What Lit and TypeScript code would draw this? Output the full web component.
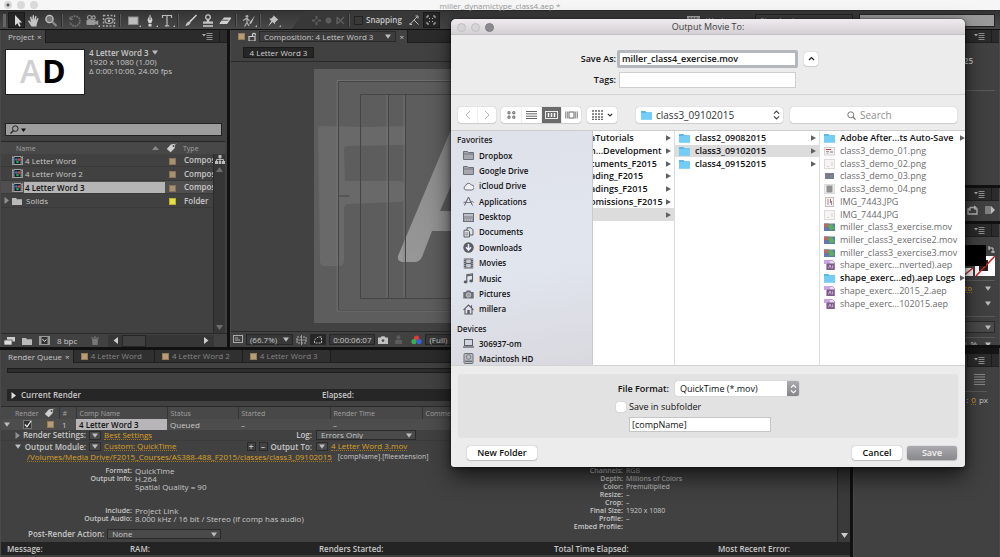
import { LitElement, html, css, svg, nothing } from "lit";
import { customElement, state } from "lit/decorators.js";

const base = css`
  * { box-sizing: border-box; margin: 0; padding: 0; }
  button, input, select { font: inherit; color: inherit; border: 0; background: none; outline: none; appearance: none; border-radius: 0; min-width: 0; }
  svg { display: block; flex: none; }
  ul { list-style: none; }
  a { color: inherit; text-decoration: none; }
`;

const glyph = (w: number, h: number, body: unknown) =>
  html`<svg width=${w} height=${h} viewBox="0 0 ${w} ${h}" fill="none" aria-hidden="true">${body}</svg>`;

const L = "#c4c4c4";
const D = "#737373";

const tools = {
  select: svg`<path d="M5 1v10.500l2.500-2.300 1.600 3.600 1.600-.7-1.600-3.600h3z" fill="#d8d8d8"/>`,
  hand: svg`<path d="M4.500 12.500 1.200 7.600c-.5-1 .7-1.600 1.400-.8l1.300 1.400L3 3.300c-.1-1 1.100-1.200 1.400-.2l.9 3L5.600 1.700c.1-1 1.300-1 1.400 0l.3 4 .9-3.400c.3-.9 1.400-.7 1.300.3L9 6.500l1.200-2c.5-.8 1.500-.3 1.200.6L9.800 10l-.4 2.500z" fill="${L}"/>`,
  zoom: svg`<circle cx="5.500" cy="5" r="3.600" fill="#777" stroke="${L}" stroke-width="1.300"/><path d="M8.200 7.700 12.500 12" stroke="#8c8c8c" stroke-width="2.200"/>`,
  rotate: svg`<path d="M3.500 3.400A5 5 0 1 1 2 8" stroke="${D}" stroke-width="1.800" stroke-dasharray="1.600 .9"/><path d="M1.500 2v4h4z" fill="${D}"/>`,
  camera: svg`<circle cx="4.500" cy="3.500" r="2" stroke="#999" stroke-width="1.200"/><circle cx="8.500" cy="3.500" r="1.700" stroke="#999" stroke-width="1.200"/><rect x="1.500" y="5.800" width="9" height="5.200" rx="1" fill="#999"/><path d="m10 8 3.200-1.800v5L10 9.500z" fill="#999"/>`,
  pan: svg`<rect x="1.500" y="1.500" width="11" height="10.500" stroke="#a6a6a6" stroke-width="1.400" stroke-dasharray="2 1.500"/><ellipse cx="7" cy="6.800" rx="4" ry="2.600" stroke="#a6a6a6" stroke-width="1.200"/><circle cx="7" cy="6.800" r="1.200" fill="#c4c4c4"/>`,
  rect: svg`<rect x="2.500" y="3" width="9.500" height="7.500" fill="#bdbdbd" stroke="#8d8d8d"/>`,
  pen: svg`<path d="M7 .5 4.600 5.500c0 1.800.9 2.800 1.200 3.700h2.400c.3-.9 1.200-1.900 1.200-3.700z" fill="#d2d2d2"/><path d="M7 2v4" stroke="#444" stroke-width=".8"/><rect x="5.500" y="10" width="3" height="2.500" fill="#d2d2d2"/>`,
  type: svg`<path d="M2.500 4V1.500h9V4M7 1.500v10.300M4.800 11.900h4.400" stroke="#bdbdbd" stroke-width="1.200"/>`,
  brush: svg`<path d="M12.500 1 6.500 8 5.300 7z" fill="#ddd"/><path d="M12.500 1 6.200 7.500" stroke="#ccc" stroke-width="1.400"/><path d="M5.800 7.300c1 .4 1 1.400.4 2.200C5.200 11 3.500 11.700 1.500 12c.6-1.600 1.500-4.500 4.300-4.700z" fill="${L}"/>`,
  stamp: svg`<circle cx="7" cy="3.200" r="2.300" stroke="${L}" stroke-width="1.300"/><path d="M6 5.500h2l.5 2H12v2.300H2V7.500h3.500z" fill="${L}"/><path d="M2 12h10" stroke="${L}" stroke-width="1.600"/>`,
  eraser: svg`<path d="M6 3.500h6.500c.6 0 .8.600.5 1L9.500 9.500c-.3.400-.6.600-1 .600H2.300c-.7 0-.9-.6-.6-1z" fill="#d0d0d0"/><path d="M4 6.200h6.300" stroke="#555"/>`,
  roto: svg`<circle cx="5" cy="2.300" r="1.400" fill="#aaa"/><path d="M1 6.500 5 4.200l2.500 3M5 5v3.500L2.500 12.500M5 8.500 7 12" stroke="#aaa" stroke-width="1.300"/><path d="M13 1.500 8 8l-.6 2.500L9.500 9z" fill="#ccc"/>`,
  pin: svg`<path d="m7.500 1.200 4.800 4.600-1.300.6L9 8.500l.1 2L6.700 8 2 12.500 5.300 7 3 4.600l2.300 0 2-2z" fill="#c0c0c0"/>`,
};

const tag = glyph(11, 10, svg`<path d="m.8 6 4-4.500 3.400-.8 1 1-.6 3.600-4 4z" fill="#cfcfcf"/><circle cx="7.500" cy="3" r=".9" fill="#444"/><path d="M8 2.500 10.500.5" stroke="#999" stroke-width=".8"/>`);
const menuIcon = glyph(11, 8, svg`<path d="M0 2h4L2 4.500z" fill="#aaa"/><path d="M4.500 1.500h6M4.500 3.500h6M4.500 5.500h6M4.500 7.500h6" stroke="#8d8d8d"/>`);
const down = glyph(6, 5, svg`<path d="M0 .5h6L3 4.700z" fill="#bdbdbd"/>`);
const right = glyph(5, 7, svg`<path d="M.5 0v7L5 3.500z" fill="#8f8f8f"/>`);
const compIcon = glyph(11, 9, svg`<rect width="11" height="9" fill="#a5a5a5"/><path d="M1.200 0v9M9.800 0v9" stroke="#444" stroke-width="1" stroke-dasharray="1.200 1"/><rect x="2.400" y="1" width="6.200" height="7" fill="#14202c"/><circle cx="4.400" cy="3.500" r="1.300" fill="#2c7fd6"/><circle cx="7" cy="3.600" r="1.300" fill="#e0402e"/><circle cx="5.500" cy="6" r="1.300" fill="#2aa65a"/>`);
const folderDark = glyph(10, 8, svg`<path d="M0 1h4l1 1.200h5V8H0z" fill="#b9b9b9"/>`);
const swatch = (c: string) => html`<i class="sw" style="background:${c}"></i>`;
const cam = glyph(10, 8, svg`<path d="M0 1.500h2.500L3.500.2h3l1 1.300H10V8H0z" fill="#c0c0c0"/><circle cx="5" cy="4.600" r="1.900" fill="#555" stroke="#eee" stroke-width=".6"/>`);

@customElement("save-dialog")
export class SaveDialog extends LitElement {
  @state() private sub = false;

  static styles = [base, css`
    :host { display: block; color: #111; font: 9px/12px "Open Sans", "Noto Sans", sans-serif; border-radius: 5px 5px 3px 3px; background: #ececec; box-shadow: 0 0 1px #000, 0 10px 22px rgba(0,0,0,.62), 0 1px 5px rgba(0,0,0,.5); overflow: hidden; }
    header { height: 16px; background: linear-gradient(#efebee, #d3d0d3); border-bottom: 1px solid #c2c0c2; display: flex; align-items: center; justify-content: center; position: relative; color: #404040; }
    h2 { font: inherit; }
    .lights { position: absolute; left: 6px; top: 4px; display: flex; gap: 5px; }
    .lights i { width: 9px; height: 9px; border-radius: 50%; background: #d6d4d6; border: 1px solid #c1bfc1; }
    .lights i:last-child { background: #8c8a91; border-color: #7e7c83; }
    .names { height: 60px; border-bottom: 1px solid #d2d2d2; padding: 14px 0 0; display: grid; grid-template-columns: 165px 181px 19px; grid-template-rows: 19px 16px; row-gap: 4px; column-gap: 1px; font-weight: 600; align-items: center; }
    .names label { text-align: right; }
    .names .one { border: 3px solid #b4b7bb; border-radius: 2px; background: #fff; height: 18px; padding: 0 2px; font-weight: 600; }
    .names .two { border: 1px solid #cfcfcf; background: #fff; height: 16px; margin: 0 2px; }
    .up { width: 14px; height: 14px; margin-left: 5px; justify-content: center; }
    .white { background: #fff; border-radius: 3px; box-shadow: 0 0 1px rgba(0,0,0,.35), 0 1px 1px rgba(0,0,0,.1); display: flex; align-items: center; }
    .bar { display: flex; height: 36px; padding: 5px 8px 0 7px; align-items: center; border-bottom: 1px solid #cdcdcd; color: #3c3c3c; }
    .bar .white { height: 16px; }
    .bar button { height: 16px; width: 19px; display: flex; align-items: center; justify-content: center; }
    .bar button + button { border-left: 1px solid #eee; }
    .bar .views button { width: 20px; }
    .bar .on { background: #6b6b6b; }
    .views { margin: 0 6px 0 5px; }
    .bar .act { width: 30px; gap: 4px; }
    .path { position: relative; width: 147px; margin: 0 7px 0 19px; padding-left: 5px; }
    .path select { flex: 1; padding: 0 4px; font-size: 10px; height: 16px; color: #333; }
    .path svg:last-child { margin-right: 3px; }
    .search { flex: 1; justify-content: center; gap: 4px; }
    .search input { width: 40px; font-size: 10px; }
    .search input::placeholder { color: #8f8f8f; opacity: 1; }
    .cols { display: grid; grid-template-columns: 142px 82px 145px 1fr; height: 235px; background: #fff; border-bottom: 1px solid #d2d2d2; }
    nav { background: linear-gradient(170deg, #dfe1e9 0%, #e1e6ee 55%, #d9d8df 100%); border-right: 1px solid #c9cad0; padding-top: 4px; overflow: hidden; font-size: 8px; line-height: 10px; font-weight: 600; }
    nav h3 { font-size: 8px; font-weight: 600; padding-left: 6px; height: 11px; color: #222; }
    nav ul { display: flex; flex-direction: column; justify-content: space-between; height: 165px; margin: 4px 0 9px; }
    nav .dev { height: 26px; margin: 3px 0 0; }
    nav a { display: flex; align-items: center; gap: 5px; padding-left: 12px; }
    .list { display: grid; grid-template-rows: repeat(14, 1fr); height: 179px; padding-top: 1px; overflow: hidden; min-width: 0; }
    .col { border-right: 1px solid #dcdcdc; overflow: hidden; }
    .col:last-child { border-right: 0; }
    .list a { display: flex; align-items: center; gap: 5px; padding: 0 3px 0 4px; white-space: nowrap; font-weight: 600; line-height: 12px; }
    .list a span { flex: 1; }
    .list .sel { background: #dcdcdc; }
    .list .dim { font-weight: 400; color: #6c6c6c; }
    .first a { padding-left: 0; gap: 0; }
    .first span { margin-left: -3px; }
    .opts { margin: 8px 7px; height: 64px; background: #e2e2e2; border-radius: 3px; padding: 7px 0 0 158px; }
    .opts .r1 { display: flex; align-items: center; height: 15px; font-weight: 600; gap: 6px; }
    .r1 label { width: 53px; display: flex; justify-content: flex-end; white-space: nowrap; }
    .pick { display: flex; width: 124px; height: 15px; background: #fff; border-radius: 2px; box-shadow: 0 0 1px rgba(0,0,0,.4); overflow: hidden; }
    .pick select { flex: 1; padding: 0 5px; font-weight: 400; }
    .pick i { width: 12px; background: linear-gradient(#aaaaae, #85858a); display: flex; align-items: center; justify-content: center; }
    .r2 { display: flex; align-items: center; gap: 3px; height: 12px; margin-top: 5px; }
    .r2 input { width: 10px; height: 10px; background: #fff; border-radius: 2px; box-shadow: 0 0 1px rgba(0,0,0,.4); }
    .r2 input:checked { background: #6b6b6b; }
    .opts .sub { display: block; width: 142px; height: 15px; border: 1px solid #c6c6c6; background: #fff; margin: 4px 0 0 13px; padding: 0 2px; }
    footer { display: flex; gap: 5px; padding: 0 8px 7px 16px; }
    footer button { height: 14px; border-radius: 3px; background: #fff; box-shadow: 0 0 1px rgba(0,0,0,.5), 0 1px 1px rgba(0,0,0,.15); font-weight: 600; width: 50px; line-height: 14px; }
    footer .new { width: 70px; margin-right: auto; }
    footer .save { background: linear-gradient(#aaaaae, #88888d); color: #f3f3f3; }
  `];

  private folder = glyph(11, 10, svg`<path d="M0 1h4.500l1 1.300H11V9.500H0z" fill="#56b9ea"/><path d="M0 3h11v6.500H0z" fill="#74cdf6"/>`);
  private arrow = glyph(5, 6, svg`<path d="M0 .3v5.400L5 3z" fill="#606060"/>`);
  private updown = (c: string) => glyph(7, 10, svg`<path d="m1 3.600 2.500-2.500L6 3.600M1 6.400l2.500 2.500L6 6.400" stroke="${c}" stroke-width="1.200"/>`);

  private side: Record<string, unknown> = {
    Dropbox: svg`<path d="M.5 1.500h4l1 1h5v7H.5z" fill="#a6a8b0" stroke="#6d6f76"/><path d="M1 4h9.500" stroke="#6d6f76" stroke-width=".8"/>`,
    "iCloud Drive": svg`<path d="M3 9a2.200 2.200 0 0 1-.3-4.300A3 3 0 0 1 8.300 4 2.500 2.500 0 0 1 8.800 9z" fill="#f0f1f5" stroke="#6d6f76"/>`,
    Applications: svg`<path d="M1.500 9.500 5.500 1l4 8.500M.5 6.800c2-1.500 3.500 0 5-.2 2 0 3.500-1.800 5-.3" stroke="#5d5f66" stroke-width="1"/>`,
    Desktop: svg`<rect x=".5" y="1.500" width="10" height="8" fill="#9a9ca4" stroke="#6d6f76"/><path d="M1 3h9" stroke="#dcdde2"/><path d="M2 8h7" stroke="#dcdde2" stroke-dasharray="1 1"/>`,
    Documents: svg`<path d="M4 .8h4l2 2V8H4z" fill="#dfe1e7" stroke="#5d5f66"/><path d="M1 3.200h4l1.500 1.500V10H1z" fill="#dfe1e7" stroke="#5d5f66"/><path d="M2.300 6h3M2.300 7.800h3" stroke="#5d5f66" stroke-width=".7"/>`,
    Downloads: svg`<circle cx="5.500" cy="5.500" r="5.200" fill="#5a5c62"/><path d="M5.500 2v5M3 5.200 5.500 8 8 5.200" stroke="#eef" stroke-width="1.500"/>`,
    Movies: svg`<rect x=".8" y=".5" width="9.400" height="10" fill="#5d5f66"/><path d="M3.200 1.500h4.600v3.500H3.200zM3.200 6h4.600v3.500H3.200z" fill="#c8cad2"/><path d="M1.900 1v9M9.100 1v9" stroke="#dfe1e7" stroke-width=".8" stroke-dasharray="1 1"/>`,
    Music: svg`<path d="M3.800 8.500V1.800l5.700-1v6.700M3.800 3l5.700-1" stroke="#5a5c62" stroke-width="1.100"/><ellipse cx="2.600" cy="9" rx="1.900" ry="1.400" fill="#5a5c62"/><ellipse cx="8.200" cy="8" rx="1.900" ry="1.400" fill="#5a5c62"/>`,
    Pictures: svg`<path d="M.3 3h2.500l1-1.500h3.500l1 1.500h2.400v6.500H.3z" fill="#6b6d74"/><circle cx="5.500" cy="6" r="2.300" fill="#9b9da5" stroke="#d6d8df" stroke-width=".7"/>`,
    millera: svg`<path d="M.5 5.800 5.500 1l5 4.800M2 5v5h7V5M8.500 1.300v2.500" stroke="#5a5c62" stroke-width="1.100"/><rect x="4.300" y="6" width="2.400" height="4" fill="#5a5c62"/>`,
    "306937-om": svg`<rect x="1.500" y="1.500" width="8" height="6" fill="#d4d6dd" stroke="#5d5f66"/><path d="M0 9h11" stroke="#5d5f66" stroke-width="1.300"/>`,
    "Macintosh HD": svg`<rect x="1" y=".5" width="9" height="10" rx="1" fill="#babcc3" stroke="#6d6f76"/><circle cx="5.500" cy="4" r="2.300" stroke="#6d6f76" stroke-width=".8"/><path d="M2 8.300h7" stroke="#6d6f76" stroke-width="1.400"/>`,
  };

  private fileIcon(kind: string) {
    if (kind === "folder") return this.folder;
    const bodies: Record<string, unknown> = {
      p1: svg`<rect x=".5" y="1.500" width="10" height="7.500" fill="#f7f2f2" stroke="#d6cfcf"/><path d="M2 3.500h5" stroke="#c33b4d"/><path d="M2 5.500h3M2.500 7h2" stroke="#a99"/><path d="M6 6h3" stroke="#68759e"/>`,
      p2: svg`<rect x=".5" y=".5" width="10" height="9" fill="#f6f4f4" stroke="#dedada"/><path d="M3 7.500h2M8 3v4" stroke="#dcc"/>`,
      p3: svg`<rect x="1" y="2" width="9" height="6" fill="#777d94"/><rect x="3" y="3.500" width="3" height="2" fill="#a0667a"/><rect x="6.500" y="4" width="2" height="2.500" fill="#5b9a8e"/>`,
      p4: svg`<rect x=".5" y=".5" width="10" height="9" fill="#eee" stroke="#ddd"/><rect x="2.500" y="1.500" width="6" height="7" fill="#919191"/>`,
      j1: svg`<rect x="1.500" y=".5" width="8" height="9" fill="#f5f1f1" stroke="#cbbcbc"/><path d="M4 2v6" stroke="#998"/><path d="M6.500 2v4" stroke="#b66"/><path d="M7.500 4v4" stroke="#88b"/>`,
      mov: svg`<rect x="0" y="1.500" width="11" height="7.500" fill="#5a7fa6"/><path d="M0 1.500h5v3.500H0z" fill="#b96a66"/><path d="m4 3 4-1 3 5-5 1.500z" fill="#5cae62"/><path d="M1 6h3v2H1z" fill="#7d6ac0"/>`,
      aep: svg`<path d="M2.500.5h6l2 2v7.500h-8z" fill="#e9dcf1" stroke="#b59cc4"/><rect x="0" y="0" width="6" height="4" fill="#c9a3e2"/><rect x="3" y="3.500" width="7.500" height="6.500" fill="#7d5c86"/><path d="M4.500 8.300 6 5l1.200 3.300M8.600 5.200v3.200" stroke="#dcc4e6" stroke-width=".8"/>`,
    };
    return glyph(11, 10, bodies[kind]);
  }

  private navItem(n: string) {
    const body = this.side[n === "Google Drive" ? "Dropbox" : n];
    return html`<li><a href="#">${glyph(11, 11, body)}${n}</a></li>`;
  }

  render() {
    const fav = ["Dropbox", "Google Drive", "iCloud Drive", "Applications", "Desktop", "Documents", "Downloads", "Movies", "Music", "Pictures", "millera"];
    const c1 = ["aTutorials", "n...Development", "cuments_F2015", "ading_F2015", "adings_F2015", "omissions_F2015", ""];
    const c2 = ["class2_09082015", "class3_09102015", "class4_09152015"];
    const c3: [string, string][] = [["Adobe After...ts Auto-Save", "folder"], ["class3_demo_01.png", "p1"], ["class3_demo_02.png", "p2"], ["class3_demo_03.png", "p3"], ["class3_demo_04.png", "p4"], ["IMG_7443.JPG", "j1"], ["IMG_7444.JPG", "p2"], ["miller_class3_exercise.mov", "mov"], ["miller_class3_exercise2.mov", "mov"], ["miller_class3_exercise3.mov", "mov"], ["shape_exerc...nverted).aep", "aep"], ["shape_exerc...ed).aep Logs", "folder"], ["shape_exerc...2015_2.aep", "aep"], ["shape_exerc...102015.aep", "aep"]];
    return html`
      <header><span class="lights"><i></i><i></i><i></i></span><h2>Output Movie To:</h2></header>
      <div class="names">
        <label for="n">Save As:</label><input id="n" class="one" .value=${"miller_class4_exercise.mov"}>
        <button class="up white" aria-label="Collapse">${glyph(7, 5, svg`<path d="m1 4 2.500-2.500L6 4" stroke="#222" stroke-width="1.200"/>`)}</button>
        <label for="t">Tags:</label><input id="t" class="two">
      </div>
      <div class="bar">
        <div class="white"><button aria-label="Back">${glyph(6, 10, svg`<path d="M5 1 1 5l4 4" stroke="#b5b5b5"/>`)}</button><button aria-label="Forward">${glyph(6, 10, svg`<path d="m1 1 4 4-4 4" stroke="#b5b5b5"/>`)}</button></div>
        <div class="white views">
          <button aria-label="Icons">${glyph(9, 8, svg`<path d="M1 .8h2v2H1zM5.800.8h2v2h-2zM1 5.200h2v2H1zM5.800 5.200h2v2h-2z" stroke="#555" stroke-width=".9"/>`)}</button>
          <button aria-label="List">${glyph(11, 8, svg`<path d="M0 .5h11M0 2.800h11M0 5.200h11M0 7.500h11" stroke="#555" stroke-width=".9"/>`)}</button>
          <button class="on" aria-label="Columns">${glyph(13, 8, svg`<rect x=".5" y=".5" width="12" height="7" stroke="#eee"/><path d="M3.500 2v4M6.500 2v4M9.500 2v4" stroke="#fff" stroke-width="1.500"/>`)}</button>
          <button aria-label="Cover flow">${glyph(13, 8, svg`<rect x="4" y="1" width="5" height="6" stroke="#666"/><path d="M.7.500v7M2.300.500v7M10.700.500v7M12.300.500v7" stroke="#777" stroke-width=".9"/>`)}</button>
        </div>
        <div class="white"><button class="act" aria-label="Arrange">${glyph(11, 10, svg`<path d="M0 1h11M0 4h11M0 7h11M0 9.500h11" stroke="#666" stroke-width="1.600" stroke-dasharray="2 1"/>`)}${glyph(6, 4, svg`<path d="m.8.800 2.200 2.200L5.200.800" stroke="#333" stroke-width="1.200"/>`)}</button></div>
        <div class="white path">${this.folder}<select aria-label="Folder"><option>class3_09102015</option></select>${this.updown("#444")}</div>
        <div class="white search">${glyph(9, 9, svg`<circle cx="3.800" cy="3.800" r="3" stroke="#777"/><path d="m6 6 2.600 2.600" stroke="#777" stroke-width="1.200"/>`)}<input placeholder="Search" aria-label="Search"></div>
      </div>
      <div class="cols">
        <nav>
          <h3>Favorites</h3><ul>${fav.map((n) => this.navItem(n))}</ul>
          <h3>Devices</h3><ul class="dev">${["306937-om", "Macintosh HD"].map((n) => this.navItem(n))}</ul>
        </nav>
        <div class="col"><div class="list first">${c1.map((n) => html`<a href="#" class=${n ? "" : "sel"} aria-label=${n || "class"}><span>${n}</span>${this.arrow}</a>`)}</div></div>
        <div class="col"><div class="list">${c2.map((n, i) => html`<a href="#" class=${i === 1 ? "sel" : ""}>${this.folder}<span>${n}</span>${this.arrow}</a>`)}</div></div>
        <div class="col"><div class="list">${c3.map(([n, k]) => html`<a href="#" class=${k === "folder" ? "" : "dim"}>${this.fileIcon(k)}<span>${n}</span>${k === "folder" ? this.arrow : nothing}</a>`)}</div></div>
      </div>
      <div class="opts">
        <div class="r1"><label for="f">File Format:</label><div class="pick"><select id="f"><option>QuickTime (*.mov)</option></select><i>${this.updown("#fff")}</i></div></div>
        <div class="r2"><input id="s" type="checkbox" .checked=${this.sub} @change=${() => (this.sub = !this.sub)}><label for="s">Save in subfolder</label></div>
        <input class="sub" aria-label="Subfolder name" .value=${"[compName]"}>
      </div>
      <footer><button class="new">New Folder</button><button>Cancel</button><button class="save">Save</button></footer>
    `;
  }
}

@customElement("app-root")
export class AppRoot extends LitElement {
  static styles = [base, css`
    :host { display: flex; flex-direction: column; height: 100vh; position: relative; overflow: hidden; background: #111; color: #c8c8c8; font: 8px/10px "Open Sans", "Noto Sans", sans-serif; }
    .title { height: 10px; background: #f6f6f6; color: #999; display: flex; align-items: center; justify-content: center; position: relative; line-height: 9px; flex: none; }
    .title span { position: absolute; left: 4px; top: 1px; display: flex; gap: 5px; }
    .title i { width: 8px; height: 8px; border-radius: 50%; background: #d9d9d9; }
    .title i:first-child { background: radial-gradient(#555 0 1px, #d9d9d9 2px); }
    .tools { height: 19px; background: linear-gradient(#343434, #484848); display: flex; align-items: center; padding: 0 5px 0 3px; border-top: 1px solid #2a2a2a; flex: none; }
    .grip { width: 3px; height: 13px; background: #666; margin-right: 2px; }
    .tools button { width: 17px; height: 16px; display: flex; align-items: center; justify-content: center; position: relative; }
    .tools button.on { background: #262626; border: 1px solid #1a1a1a; }
    .tools button.more::after { content: ""; position: absolute; right: 0; bottom: 1px; border: 1px solid #bbb; border-left-color: transparent; border-top-color: transparent; }
    .sep { width: 1px; height: 13px; margin: 0 3px; background: #5a5a5a; box-shadow: -1px 0 #2c2c2c; }
    .mode { display: flex; align-items: center; gap: 4px; height: 18px; padding-left: 30px; margin-left: 1px; background: linear-gradient(125deg, transparent 18px, #383838 19px); }
    .mode .sep { margin: 0; }
    .snap { display: flex; align-items: center; gap: 3px; font-weight: 600; }
    .snap input { width: 9px; height: 9px; border: 1px solid #222; background: #3a3a3a; }
    .ws { margin-left: auto; display: flex; align-items: center; gap: 6px; }
    .ws select { width: 98px; height: 13px; border: 1px solid #222; background: #3c3c3c; padding: 0 4px; }
    .ws input { width: 136px; height: 13px; border: 1px solid #222; background: #9a9a9a; color: #222; padding: 0 18px; }
    .ws input::placeholder { color: #222; }
    .work { flex: 1; display: grid; grid-template-columns: 1fr 147px; gap: 3px; padding-top: 1px; min-height: 0; }
    .left, .right { display: flex; flex-direction: column; gap: 3px; min-width: 0; }
    .top { display: grid; grid-template-columns: 227px 1fr; gap: 3px; height: 317px; }
    .panel { background: #414141; display: flex; flex-direction: column; min-width: 0; border-left: 1px solid #4a4a4a; overflow: hidden; }
    .tabs { height: 13px; background: #2b2b2b; display: flex; flex: none; align-items: stretch; border-bottom: 1px solid #1f1f1f; }
    .tab { display: flex; align-items: center; gap: 3px; padding: 0 3px 0 7px; background: #414141; border-right: 1px solid #1c1c1c; margin-bottom: -1px; }
    .tab.off { background: #303030; color: #868686; margin-bottom: 0; padding: 0 12px 0 7px; }
    .tab.para { width: 117px; justify-content: flex-end; }
    .tabs .menu { margin-left: auto; padding: 2px 6px; border-right: 1px solid #1c1c1c; }
    .tabs .g { width: 7px; }
    .sw { width: 7px; height: 7px; display: inline-block; flex: none; border: 1px solid rgba(0,0,0,.2); }
    .row { display: flex; align-items: center; }
    .info { display: flex; gap: 4px; padding: 6px 5px 0 4px; height: 80px; line-height: 9px; }
    .info div + div { margin-top: -1px; }
    .thumb { width: 80px; height: 46px; background: #fff; border: 1px solid #1f1f1f; flex: none; }
    .info b { display: flex; gap: 3px; align-items: center; font-weight: 600; }
    .find { display: flex; align-items: center; gap: 2px; height: 13px; margin: 0 5px 5px 4px; border: 1px solid #222; background: #9d9d9d; padding-left: 4px; }
    .find input { flex: 1; }
    .proj { display: grid; grid-template-columns: 1fr 12px; grid-template-rows: auto 1fr; flex: 1; border-top: 1px solid #262626; min-height: 0; overflow: hidden; margin-right: 2px; }
    .proj .wide { grid-column: 1 / 3; }
    table { border-collapse: collapse; table-layout: fixed; width: 100%; text-align: left; }
    th { font-weight: 400; color: #a2a2a2; height: 12px; background: #484848; white-space: nowrap; line-height: 9px; font-size: 7px; }
    .files { align-self: start; height: 54px; }
    .files td { border-bottom: 1px solid #393939; line-height: 10px; white-space: nowrap; overflow: hidden; }
    .cell { display: flex; align-items: center; gap: 1px; padding-left: 11px; }
    .cell.open { padding-left: 3px; gap: 3px; }
    .cell span { padding: 0 4px 0 1px; flex: 1; line-height: 11px; }
    .files .on { background: #4f4f4f; }
    .files .on span { background: #b5b5b5; color: #111; font-weight: 600; }
    .files .sw { margin-left: 4px; vertical-align: middle; }
    .scroll { background: #363636; border-left: 1px solid #2a2a2a; display: flex; flex-direction: column; align-items: center; padding: 1px 0 3px; }
    .files .t { font-weight: 600; }
    .scroll svg:nth-child(2) { margin: 3px 0 auto; }
    .foot { display: flex; align-items: center; height: 14px; gap: 7px; padding-left: 3px; border-top: 1px solid #2a2a2a; flex: none; }
    .hs { flex: 1; display: flex; align-items: center; height: 12px; background: #363636; margin: 0 13px 0 2px; padding: 0 5px; }
    .hs i { width: 24px; height: 12px; background: #414141; border: 1px solid #262626; margin: 0 auto 0 4px; }
    .crumb { height: 19px; border-bottom: 1px solid #2a2a2a; padding: 4px 12px; flex: none; }
    .crumb button { background: #262626; border: 1px solid #1a1a1a; height: 11px; width: 71px; line-height: 9px; color: #d0d0d0; }
    .combo { display: flex; align-items: center; gap: 12px; border: 1px solid #2a2a2a; background: #3c3c3c; height: 11px; padding: 0 4px; }
    .view { flex: 1; display: flex; justify-content: center; align-items: center; background: #424242; padding: 0 2px 1px 0; }
    .cfoot { display: flex; align-items: center; gap: 3px; height: 16px; border-top: 1px solid #2a2a2a; padding: 0 2px; flex: none; }
    .cfoot .box { border: 1px solid #262626; background: #383838; height: 11px; display: flex; align-items: center; padding: 0 3px; gap: 6px; }
    .cfoot .box.in { background: #262626; }
    .rgb { padding-left: 5px; }
    .rq { flex: 1; min-height: 0; }
    .prog { height: 5px; background: #2e2e2e; border: 1px solid #1d1d1d; margin: 5px 12px 16px 6px; flex: none; }
    .cur { background: #262626; height: 12px; margin: 0 0 5px 6px; display: grid; grid-template-columns: 311px 1fr; align-items: center; padding-left: 4px; font-weight: 600; flex: none; }
    .cur span { display: flex; align-items: center; gap: 5px; }
    .rqm { display: grid; grid-template-columns: 1fr 13px; flex: 1; min-height: 0; overflow: hidden; border-top: 1px solid #2a2a2a; }
    .rqm th { border-left: 1px solid #353535; padding-left: 3px; }
    .rqm th:first-child { border: 0; padding-left: 14px; }
    .rqm th:nth-child(2) { border: 0; padding: 0; }
    .jobs td { height: 11px; background: #4d4d4d; line-height: 9px; padding-left: 3px; }
    .jobs .nm { background: #b7b5b7; color: #111; font-weight: 600; }
    .jobs .ck { display: flex; align-items: center; gap: 13px; }
    .mod { display: grid; grid-template-columns: 85px 224px 1fr; column-gap: 3px; height: 11px; align-items: center; border-bottom: 1px solid #3b3b3b; font-weight: 600; }
    .mod.b { border: 0; }
    .lab { display: flex; justify-content: space-between; align-items: center; padding-left: 14px; white-space: nowrap; }
    .mod .val { display: flex; align-items: center; gap: 3px; }
    .mod .end { margin-left: auto; padding-right: 1px; }
    .pm { border: 1px solid #2a2a2a; width: 9px; height: 9px; line-height: 7px; }
    .dd { width: 12px; height: 9px; border: 1px solid #2c2c2c; background: #4a4a4a; display: flex; align-items: center; justify-content: center; }
    .or { color: #dba128; border-bottom: 1px dotted #a5781c; line-height: 8px; font-weight: 400; }
    .sel { display: flex; align-items: center; border: 1px solid #2a2a2a; background: #4a4a4a; height: 10px; padding-right: 3px; }
    .sel.log { width: 100px; }
    .sel select { flex: 1; height: 8px; line-height: 8px; padding: 0 4px; font-weight: 400; }
    .dest { padding: 1px 0 0 26px; display: flex; gap: 6px; height: 15px; line-height: 8px; align-items: flex-start; }
    .dest span { font-size: 7px; }
    .det { display: grid; grid-template-columns: 131px 354px 131px 1fr; column-gap: 3px; grid-auto-rows: 8px; line-height: 8px; font-size: 7px; }
    .det b { text-align: right; font-weight: 600; }
    .det .big { font-size: 8px; }
    .post { display: flex; align-items: center; gap: 3px; padding-left: 27px; font-weight: 600; margin-top: -2px; }
    .post .sel { width: 114px; }
    .vs { background: #3a3a3a; border-left: 1px solid #262626; display: flex; flex-direction: column; justify-content: flex-end; align-items: center; padding-bottom: 4px; }
    .msg { background: #242424; height: 13px; display: grid; grid-template-columns: 123px 189px 235px 164px 1fr; align-items: center; padding-left: 6px; font-weight: 600; flex: none; margin-bottom: 2px; }
    .right .panel { border-right: 1px solid #4a4a4a; }
    .p1 { height: 155px; } .p2 { height: 33px; } .p3 { height: 121px; } .p4 { flex: 1; }
    .e { display: flex; justify-content: flex-end; align-items: center; flex: none; }
    .e b { font-weight: 600; }
    .rgbinfo { height: 47px; padding: 0 26px 11px 0; }
    .prev { gap: 7px; padding: 4px 4px 0 0; }
    .fill { height: 43px; padding: 4px 3px 0 0; }
    .opt { height: 15px; padding-right: 8px; gap: 13px; }
    .opt.last { margin-bottom: 5px; }
    .wide { flex: 1; }
    .right .sel.wide { height: 12px; justify-content: flex-end; }
    .selrow { height: 20px; padding: 0 4px 0 20px; }
    .pct { padding: 1px 8px 0 0; gap: 4px; }
    .rail { height: 6px; background: #151515; flex: none; }
    .align { height: 24px; padding-right: 14px; }
    .px { height: 16px; padding-right: 11px; gap: 3px; }
    .ln { border-top: 1px solid #5a5a5a; margin: 0 4px; }
    .p4 .ln { margin-right: 12px; }
    save-dialog { position: absolute; left: 451px; top: 19px; width: 514px; }
  `];

  private menuTabs(label = "") {
    return html`<div class="tabs">${label ? html`<span class="tab para"><span>${label}</span><span>×</span></span>` : nothing}<button class="menu" aria-label="Panel menu">${menuIcon}</button><i class="g"></i></div>`;
  }

  private toolbar() {
    const groups: [string, boolean][][] = [
      [["select", false], ["hand", false], ["zoom", false]],
      [["rotate", false], ["camera", true], ["pan", false]],
      [["rect", true], ["pen", true], ["type", true]],
      [["brush", false], ["stamp", false], ["eraser", false]],
      [["roto", true]],
      [["pin", true]],
    ];
    return html`<div class="tools"><i class="grip"></i>
      ${groups.map((g, i) => html`${i ? html`<i class="sep"></i>` : nothing}${g.map(([k, m]) => html`<button aria-label=${k} class="${k === "select" ? "on" : ""} ${m ? "more" : ""}">${glyph(14, 13, tools[k as keyof typeof tools])}</button>`)}`)}
      <div class="mode">
        ${glyph(9, 9, svg`<path d="M4.500 0v9M0 4.500h9" stroke="#5c5c5c" stroke-width="2"/><circle cx="4.500" cy="4.500" r="1.500" fill="#383838"/>`)}
        ${glyph(7, 7, svg`<circle cx="3.500" cy="3.500" r="3" fill="#5c5c5c"/>`)}
        ${glyph(9, 9, svg`<path d="m1 1 7 7M8 1 1 8M1 1v7" stroke="#5c5c5c" stroke-width="1.500"/>`)}
        <i class="sep"></i>
        <label class="snap"><input type="checkbox">Snapping</label>
        <span class="row">
          <button aria-label="Snap edges">${glyph(11, 10, svg`<path d="M1 9.500 5 5l4.500 4.500M5 5 8 2" stroke="#bbb"/><path d="M6.500 1H9v2.500M1 8v1.500h2" stroke="#bbb"/>`)}</button>
          <button class="on" aria-label="Snap bounds">${glyph(10, 10, svg`<path d="M1 3V1h2M7 1h2v2M9 7v2H7M3 9H1V7" stroke="#bbb"/><path d="M3 3l1 1M7 3 6 4M3 7l1-1M7 7 6 6" stroke="#bbb"/>`)}</button>
        </span>
      </div>
      <div class="ws">${glyph(13, 11, svg`<path d="M0 1h13v4H0z" fill="#aaa"/><path d="M2 3h9" stroke="#444" stroke-dasharray="2 1"/>`)}<label for="w">Workspace:</label><select id="w"><option>Standard</option></select><input placeholder="Search Help" aria-label="Search Help"></div>
    </div>`;
  }

  private project() {
    const rows: [string, string, string][] = [["4 Letter Word", "#a89170", "Compos"], ["4 Letter Word 2", "#a89170", "Compos"], ["4 Letter Word 3", "#a89170", "Compos"], ["Solids", "#e9dc45", "Folder"]];
    return html`<section class="panel">
      <div class="tabs"><span class="tab">Project <span>×</span></span><button class="menu" aria-label="Panel menu">${menuIcon}</button><i class="g"></i></div>
      <div class="info">
        <div class="thumb">${glyph(78, 44, svg`<g font-family="Open Sans, sans-serif" font-size="32" font-weight="600"><text x="14" y="33" fill="#cfcfcf">A</text><text x="36" y="33" fill="#000" font-weight="700">D</text></g>`)}</div>
        <div><b>4 Letter Word 3 ${down}</b><p>1920 x 1080 (1.00)</p><p>Δ 0:00:10:00, 24.00 fps</p></div>
      </div>
      <div class="find">${glyph(9, 9, svg`<circle cx="5.300" cy="3.600" r="2.800" stroke="#222"/><path d="M3.200 5.700.5 8.500" stroke="#222" stroke-width="1.300"/>`)}${glyph(5, 4, svg`<path d="M0 .5h5L2.500 4z" fill="#111"/>`)}<input aria-label="Find in project"></div>
      <div class="proj">
        <table class="wide"><colgroup><col style="width:15px"><col><col style="width:14px"><col style="width:17px"><col style="width:42px"></colgroup><tr><th></th><th>Name</th><th>${glyph(7, 4, svg`<path d="M0 4h7L3.500 0z" fill="#888"/>`)}</th><th>${tag}</th><th>Type</th></tr></table>
        <table class="files"><colgroup><col><col style="width:19px"><col style="width:29px"></colgroup>
          ${rows.map(([n, c, t], i) => html`<tr class=${i === 2 ? "on" : ""}><td><div class="cell ${i === 3 ? "open" : ""}">${i === 3 ? html`${right}${folderDark}` : compIcon}<span>${n}</span></div></td><td>${swatch(c)}</td><td class="t">${t}</td></tr>`)}
        </table>
        <div class="scroll">
          ${glyph(10, 9, svg`<path d="M3.500 0h3v3h-3zM0 6h3v3H0zM3.700 6h2.600v3H3.700zM7 6h3v3H7z" fill="#bbb"/><path d="M5 3v3M1.500 6V4.500h7V6" stroke="#bbb"/>`)}
          ${glyph(7, 5, svg`<path d="M0 5h7L3.500 0z" fill="#6d6d6d"/>`)}
          ${glyph(7, 5, svg`<path d="M0 0h7L3.500 5z" fill="#6d6d6d"/>`)}
        </div>
      </div>
      <div class="foot">
        ${glyph(11, 8, svg`<rect x="3" y="0" width="8" height="4.500" fill="#ccc"/><rect x="0" y="3" width="8" height="5" fill="#ddd" stroke="#444" stroke-width=".7"/>`)}
        ${folderDark}
        ${glyph(11, 9, svg`<rect width="11" height="9" fill="#9a9a9a"/><rect x="2.500" y="1" width="6" height="7" fill="#333"/><path d="m3.500 3 2 2.500 2-2" stroke="#ddd"/>`)}
        <span>8 bpc</span><span></span>
        ${glyph(8, 9, svg`<path d="M0 2h8M3 1h2" stroke="#777"/><path d="M1 3h6l-.5 6h-5z" fill="#777"/>`)}
        <div class="hs">${glyph(5, 7, svg`<path d="M5 0v7L.5 3.500z" fill="#ccc"/>`)}<i></i>${glyph(5, 7, svg`<path d="M0 0v7l4.500-3.500z" fill="#ccc"/>`)}</div>
      </div>
    </section>`;
  }

  private comp() {
    return html`<section class="panel">
      <div class="tabs"><span class="tab">${swatch("#b89c74")}${glyph(8, 9, svg`<path d="M1 4.500h6V9H1zM4.500 4.500V2.500a1.600 1.600 0 0 1 3 0v1" stroke="#ccc" stroke-width="1.200"/>`)}<span class="combo">Composition: 4 Letter Word 3 ${down}</span><span>×</span></span></div>
      <div class="crumb"><button>4 Letter Word 3</button></div>
      <div class="view">
        <svg width="452" height="254" viewBox="0 0 452 254">
          <defs><linearGradient id="a" x1="0" y1="1" x2="1" y2="0"><stop offset="0" stop-color="#989898"/><stop offset="1" stop-color="#828282"/></linearGradient></defs>
          <rect width="452" height="254" fill="#5d5d5d"/>
          <path d="M4 61q0-4 4-4l44 1 36-1q4 0 4 4v11q0 4-4 4l-54 1q-4 0-4 4l1 31h55q4 0 4 4v13q0 4-4 4l-52 2q-4 0-4 5v52q0 5-5 5H10q-4 0-4-5z" fill="#696969"/>
          <path d="M84 187 136 63h40l54 124q1 6-6 6h-14q-4 0-6-5l-12-26h-74l-10 26q-2 4-6 5H88q-5-1-4-6zM126 142h54l-26-64z" fill="url(#a)" fill-rule="evenodd"/>
          <g fill="none" stroke="#454545"><path d="M24.500 12.500h404v229h-404zM46.500 25.500h360v204h-360zM74.500 25.500v203M91.500 25.500v203M24.500 127h11"/></g>
          <g fill="none" stroke="#7c7c7c" stroke-width=".6"><path d="M23 11.500h406M23.200 11v231h406M73 26v202M90 26v202"/></g>
        </svg>
      </div>
      <div class="cfoot">
        ${glyph(10, 9, svg`<rect x=".5" y=".5" width="9" height="7" stroke="#aaa"/><path d="M2 3h3M2 5h5" stroke="#aaa"/>`)}
        <span class="box">(66.7%) ${down}</span>
        ${glyph(11, 10, svg`<rect x="1" y="2" width="9" height="6" stroke="#aaa" stroke-dasharray="2 1"/><path d="M5.500 0v10M0 5h11" stroke="#aaa" stroke-width=".8"/>`)}
        <span class="box in">${glyph(8, 8, svg`<path d="M.5 7V4L4 1h3.500v6z" stroke="#bbb" stroke-dasharray="2 1"/>`)}</span>
        <span class="box">0:00:06:07</span>${cam}
        <span></span>
        ${glyph(9, 9, svg`<circle cx="4.500" cy="2.200" r="2" fill="#5c5c5c"/><path d="M1 9V6q0-1.500 3.500-1.500T8 6v3z" fill="#5c5c5c"/>`)}
        <span class="rgb">${glyph(11, 10, svg`<circle cx="5.500" cy="3" r="2.600" fill="#e23a34"/><circle cx="3" cy="6.600" r="2.600" fill="#35b04b"/><circle cx="8" cy="6.600" r="2.600" fill="#3a5fd8"/>`)}</span>
        <span class="box">(Full) <span></span>${down}</span>
      </div>
    </section>`;
  }

  private queue() {
    const lt = [["Format:", "QuickTime"], ["Output Info:", "H.264"], ["", "Spatial Quality = 90"], ["", ""], ["", ""], ["Include:", "Project Link"], ["Output Audio:", "8.000 kHz / 16 bit / Stereo (if comp has audio)"], ["", ""]];
    const rt = [["Channels:", "RGB"], ["Depth:", "Millions of Colors"], ["Color:", "Premultiplied"], ["Resize:", "–"], ["Crop:", "–"], ["Final Size:", "1920 x 1080"], ["Profile:", "–"], ["Embed Profile:", ""]];
    return html`<section class="panel rq">
      <div class="tabs"><span class="tab">Render Queue <span>×</span></span>${["4 Letter Word", "4 Letter Word 2", "4 Letter Word 3"].map((t) => html`<span class="tab off">${swatch("#b89c74")}${t}</span>`)}</div>
      <div class="prog"></div>
      <div class="cur"><span>${glyph(5, 7, svg`<path d="M.5 0v7L5 3.500z" fill="#ddd"/>`)}Current Render</span><span>Elapsed:</span></div>
      <div class="rqm">
        <div>
          <table class="jobs"><colgroup><col style="width:43px"><col style="width:15px"><col style="width:17px"><col style="width:91px"><col style="width:71px"><col style="width:92px"><col style="width:92px"><col></colgroup>
            <tr><th>Render</th><th>${tag}</th><th>#</th><th>Comp Name</th><th>Status</th><th>Started</th><th>Render Time</th><th>Comment</th></tr>
            <tr><td><div class="ck">${down}<button role="checkbox" aria-checked="true" aria-label="Render">${glyph(9, 9, svg`<rect x=".5" y=".5" width="8" height="8" fill="#333" stroke="#777"/><path d="m2 4.500 2 2.300L8 1" stroke="#eee" stroke-width="1.200"/>`)}</button></div></td><td>${swatch("#b89c74")}</td><td>1</td><td class="nm">4 Letter Word 3</td><td>Queued</td><td>–</td><td>–</td><td></td></tr>
          </table>
          <div class="mod"><span class="lab">${right}Render Settings:</span><span class="val"><button class="dd" aria-label="Render settings menu">${down}</button><a class="or" href="#">Best Settings</a><label class="end" for="lg">Log:</label></span><span class="sel log"><select id="lg"><option>Errors Only</option></select>${down}</span></div>
          <div class="mod b"><span class="lab">${down}Output Module:</span><span class="val"><button class="dd" aria-label="Output module menu">${down}</button><a class="or" href="#">Custom: QuickTime</a><span class="end val"><button class="pm" aria-label="Add">+</button><button class="pm" aria-label="Remove">–</button>Output To:</span></span><span class="val"><button class="dd" aria-label="Output to menu">${down}</button><a class="or" href="#">4 Letter Word 3.mov</a></span></div>
          <div class="dest"><a class="or" href="#">/Volumes/Media Drive/F2015_Courses/AS388-488_F2015/classes/class3_09102015</a><span>[compName].[fileextension]</span></div>
          <div class="det">${lt.map((l, i) => html`<b>${l[0]}</b><span class="big">${l[1]}</span><b>${rt[i][0]}</b><span>${rt[i][1]}</span>`)}</div>
          <div class="post"><label for="pr">Post-Render Action:</label><span class="sel"><select id="pr"><option>None</option></select>${down}</span></div>
        </div>
        <div class="vs">${glyph(7, 5, svg`<path d="M0 0h7L3.500 5z" fill="#ccc"/>`)}</div>
      </div>
      <div class="msg"><span>Message:</span><span>RAM:</span><span>Renders Started:</span><span>Total Time Elapsed:</span><span>Most Recent Error:</span></div>
    </section>`;
  }

  private dock() {
    return html`<div class="right">
      <section class="panel p1">${this.menuTabs()}<div class="e rgbinfo"><b>Y : 625</b></div><div class="ln"></div></section>
      <section class="panel p2">${this.menuTabs()}<div class="e prev">${glyph(11, 10, svg`<path d="M3 4H1v5h9V4H8M3 6V2.500h5" stroke="#bbb" stroke-width="1.300"/><path d="M7 .3 10 2.500 7 4.700z" fill="#bbb"/>`)}${glyph(10, 8, svg`<path d="M1 0v8M3 0v8M5 0v8" stroke="#aaa" stroke-width="1.200"/><path d="M6 0v8l4-4z" fill="#bbb"/>`)}</div></section>
      <section class="panel p3">${this.menuTabs()}
        <div class="e fill">${glyph(36, 33, svg`<rect x="15" y="12" width="20" height="20" fill="#fff"/><rect x="19" y="16" width="9" height="11" fill="#222"/><path d="m16 32 19-20" stroke="#c22" stroke-width="1.500"/><rect x="2" y="24" width="11" height="8" fill="#fff"/><path d="m3 32 10-8" stroke="#c22" stroke-width="1.500"/><rect x="0" y="1" width="26" height="21" fill="#000"/><path d="M29 4h4v5M29 2v4M31 8h4" stroke="#ccc"/>`)}</div>
        <div class="ln"></div>
        <div class="e opt"><a class="or" href="#">Auto</a>${down}</div>
        <div class="e opt last">${down}</div>
        <div class="ln"></div>
        <div class="e selrow"><span class="sel wide">${down}</span></div>
        <div class="ln"></div>
        <div class="e pct"><a class="or" href="#">0</a> % <span></span>${down}</div>
      </section>
      <section class="panel p4"><div class="rail"></div>${this.menuTabs("Paragraph")}
        <div class="e align">${glyph(11, 11, svg`<path d="M0 .5h11M0 3h11M0 5.500h11M0 8h11M0 10.500h11" stroke="#888"/>`)}</div>
        <div class="ln"></div>
        <div class="e px"><span>:</span> <a class="or" href="#">0</a>px</div>
      </section>
    </div>`;
  }

  render() {
    return html`
      <div class="title"><span><i></i><i></i><i></i></span>miller_dynamictype_class4.aep *</div>
      ${this.toolbar()}
      <div class="work"><div class="left"><div class="top">${this.project()}${this.comp()}</div>${this.queue()}</div>${this.dock()}</div>
      <save-dialog></save-dialog>`;
  }
}
